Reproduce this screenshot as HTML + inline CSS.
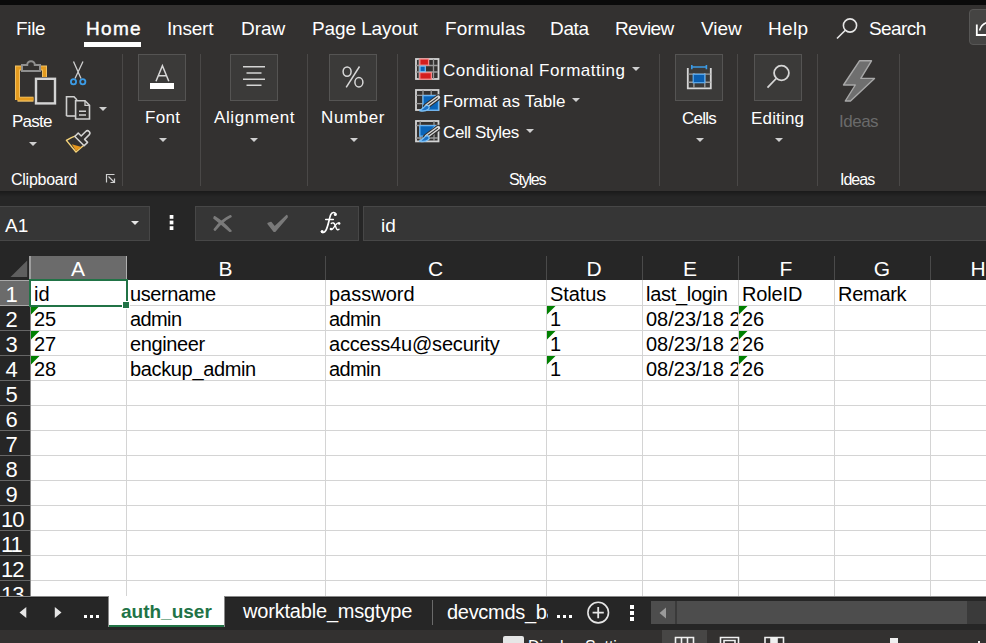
<!DOCTYPE html><html><head><meta charset="utf-8"><style>
*{margin:0;padding:0;box-sizing:border-box}
html,body{width:986px;height:643px;overflow:hidden;background:#262626;font-family:"Liberation Sans",sans-serif;position:relative}
div{position:absolute;white-space:nowrap}
svg{position:absolute}
</style></head><body>
<div style="left:0px;top:0px;width:986px;height:5px;background:#0a0a0a;"></div>
<div style="left:0px;top:5px;width:986px;height:186px;background:#333130;"></div>
<div style="left:16.00px;top:13.92px;font-size:19px;line-height:29px;color:#fff;letter-spacing:-0.333px;">File</div>
<div style="left:167.00px;top:13.92px;font-size:19px;line-height:29px;color:#fff;letter-spacing:-0.200px;">Insert</div>
<div style="left:241.00px;top:13.92px;font-size:19px;line-height:29px;color:#fff;">Draw</div>
<div style="left:312.00px;top:13.92px;font-size:19px;line-height:29px;color:#fff;letter-spacing:-0.100px;">Page Layout</div>
<div style="left:445.00px;top:13.92px;font-size:19px;line-height:29px;color:#fff;letter-spacing:0.143px;">Formulas</div>
<div style="left:550.00px;top:13.92px;font-size:19px;line-height:29px;color:#fff;letter-spacing:-0.333px;">Data</div>
<div style="left:615.00px;top:13.92px;font-size:19px;line-height:29px;color:#fff;letter-spacing:-0.600px;">Review</div>
<div style="left:701.00px;top:13.92px;font-size:19px;line-height:29px;color:#fff;">View</div>
<div style="left:768.00px;top:13.92px;font-size:19px;line-height:29px;color:#fff;letter-spacing:0.333px;">Help</div>
<div style="left:869.00px;top:13.92px;font-size:19px;line-height:29px;color:#fff;letter-spacing:-0.600px;">Search</div>
<div style="left:86.00px;top:13.92px;font-size:19px;line-height:29px;color:#fff;letter-spacing:1.333px;-webkit-text-stroke:0.45px #fff;">Home</div>
<div style="left:84px;top:42px;width:57px;height:5px;background:#fff;"></div>
<svg style="position:absolute;left:834px;top:16px;overflow:visible" width="26" height="26" viewBox="834 16 26 26"><circle cx="850" cy="25.5" r="6.6" fill="none" stroke="#e6e6e6" stroke-width="1.6"/><path d="M845.3 30.2L837 38.5" stroke="#e6e6e6" stroke-width="1.6"/></svg>
<div style="left:969px;top:9px;width:30px;height:36px;background:#454443;border:1px solid #575655;border-radius:4px"></div>
<svg style="position:absolute;left:970px;top:18px;overflow:visible" width="16" height="20" viewBox="970 18 16 20"><path d="M976.8 24.5V35H990" fill="none" stroke="#fff" stroke-width="1.8"/><path d="M979.5 30.5C981 25 984 22.5 990 22" fill="none" stroke="#fff" stroke-width="1.5"/></svg>
<div style="left:122px;top:54px;width:1px;height:132px;background:#4a4847;"></div>
<div style="left:200px;top:54px;width:1px;height:132px;background:#4a4847;"></div>
<div style="left:307px;top:54px;width:1px;height:132px;background:#4a4847;"></div>
<div style="left:397px;top:54px;width:1px;height:132px;background:#4a4847;"></div>
<div style="left:659px;top:54px;width:1px;height:132px;background:#4a4847;"></div>
<div style="left:737px;top:54px;width:1px;height:132px;background:#4a4847;"></div>
<div style="left:817px;top:54px;width:1px;height:132px;background:#4a4847;"></div>
<div style="left:899px;top:54px;width:1px;height:132px;background:#4a4847;"></div>
<svg style="position:absolute;left:10px;top:55px;overflow:visible" width="50" height="52" viewBox="10 55 50 52"><path d="M17.5 100V68H22 M39 68H44.5V77" fill="none" stroke="#f2c46a" stroke-width="5"/><path d="M17.5 99.2H33.5" stroke="#f2c46a" stroke-width="5"/><path d="M17.5 100V68H22 M39 68H44.5V77 M17.5 99H33.5" fill="none" stroke="#e49b1f" stroke-width="3.2"/><path d="M22 71V65H27.2A3.8 3.8 0 0 1 34.8 65H40V71Z" fill="#333130" stroke="#8f8f8f" stroke-width="2"/><rect x="36" y="78.8" width="19" height="24.6" fill="#333130" stroke="#d4d4d4" stroke-width="2.4"/></svg>
<div style="left:12.00px;top:107.61px;font-size:17px;line-height:27px;color:#fff;letter-spacing:-0.750px;">Paste</div>
<svg style="position:absolute;left:29px;top:142px" width="8" height="4"><path d="M0 0H8L4.0 4Z" fill="#cfcfcf"/></svg>
<svg style="position:absolute;left:66px;top:58px;overflow:visible" width="22" height="30" viewBox="66 58 22 30"><path d="M73.5 61.5L81 78.5 M83 61.5L75 78.5" stroke="#cfcfcf" stroke-width="1.3" fill="none"/><circle cx="73.5" cy="81.8" r="2.6" fill="none" stroke="#3c9ce6" stroke-width="1.8"/><circle cx="82.8" cy="81.8" r="2.6" fill="none" stroke="#3c9ce6" stroke-width="1.8"/></svg>
<svg style="position:absolute;left:64px;top:94px;overflow:visible" width="30" height="28" viewBox="64 94 30 28"><path d="M66.5 116V96.8H74L77 100" fill="none" stroke="#cfcfcf" stroke-width="1.6"/><path d="M66.5 116H75" fill="none" stroke="#cfcfcf" stroke-width="1.6"/><path d="M75.6 119V100.8H85L89.5 105.3V119Z" fill="#333130" stroke="#cfcfcf" stroke-width="1.6"/><path d="M85 100.8V105.3H89.5" fill="none" stroke="#cfcfcf" stroke-width="1.3"/><path d="M79 111.2H86 M79 115H86" stroke="#cfcfcf" stroke-width="1.4"/></svg>
<svg style="position:absolute;left:99px;top:107px" width="8" height="4"><path d="M0 0H8L4.0 4Z" fill="#cfcfcf"/></svg>
<svg style="position:absolute;left:62px;top:126px;overflow:visible" width="32" height="30" viewBox="62 126 32 30"><path d="M76.3 135.6Q70.5 137.5 66.4 140.4L76 152L85 144.3" fill="none" stroke="#f5d37a" stroke-width="1.4" stroke-linejoin="round"/><path d="M71.8 144.2L81.5 147L76 151Z" fill="#e6961c"/><g transform="rotate(45 81.2 139.4)"><path d="M74.6 141.8V137H78.8V130.6A2.4 2.4 0 0 1 83.6 130.6V137H87.8V141.8Z" fill="#333130" stroke="#d4d4d4" stroke-width="1.5" stroke-linejoin="round"/></g></svg>
<div style="left:11.00px;top:167.46px;font-size:16px;line-height:26px;color:#fff;letter-spacing:-0.250px;">Clipboard</div>
<svg style="position:absolute;left:104px;top:172px;overflow:visible" width="14" height="14" viewBox="104 172 14 14"><path d="M106.5 182.5V174.5H114.5 M108.5 176.5L114.5 182.5 M114.5 178.5V182.5H110.5" fill="none" stroke="#d0d0d0" stroke-width="1.2"/></svg>
<div style="left:138px;top:54px;width:48px;height:47px;background:#3b3a39;border:1px solid #555453"></div>
<svg style="position:absolute;left:150px;top:60px;overflow:visible" width="26" height="26" viewBox="150 60 26 26"><path d="M156 81.2L162.4 65.8L168.8 81.2 M158.3 75.8H166.5" fill="none" stroke="#d8d8d8" stroke-width="1.5"/></svg>
<div style="left:150px;top:83px;width:24px;height:6px;background:#fff;"></div>
<div style="left:145.00px;top:103.61px;font-size:17px;line-height:27px;color:#fff;letter-spacing:0.333px;">Font</div>
<svg style="position:absolute;left:159px;top:138px" width="8" height="4"><path d="M0 0H8L4.0 4Z" fill="#cfcfcf"/></svg>
<div style="left:230px;top:54px;width:48px;height:47px;background:#3b3a39;border:1px solid #555453"></div>
<svg style="position:absolute;left:240px;top:62px;overflow:visible" width="30" height="30" viewBox="240 62 30 30"><path d="M243 66.8H265 M246.5 73H261.5 M243 79.2H265 M246.5 85.3H261.5" stroke="#d4d4d4" stroke-width="1.4"/></svg>
<div style="left:214.00px;top:103.61px;font-size:17px;line-height:27px;color:#fff;letter-spacing:0.625px;">Alignment</div>
<svg style="position:absolute;left:250px;top:138px" width="8" height="4"><path d="M0 0H8L4.0 4Z" fill="#cfcfcf"/></svg>
<div style="left:329px;top:54px;width:48px;height:47px;background:#3b3a39;border:1px solid #555453"></div>
<svg style="position:absolute;left:338px;top:62px;overflow:visible" width="30" height="30" viewBox="338 62 30 30"><ellipse cx="347.1" cy="71.6" rx="4" ry="4.7" fill="none" stroke="#d8d8d8" stroke-width="1.5"/><ellipse cx="358.9" cy="82.3" rx="4" ry="4.7" fill="none" stroke="#d8d8d8" stroke-width="1.5"/><path d="M359.5 66.5L346.2 87.4" stroke="#d8d8d8" stroke-width="1.5"/></svg>
<div style="left:321.00px;top:103.61px;font-size:17px;line-height:27px;color:#fff;letter-spacing:0.600px;">Number</div>
<svg style="position:absolute;left:350px;top:138px" width="8" height="4"><path d="M0 0H8L4.0 4Z" fill="#cfcfcf"/></svg>
<svg style="position:absolute;left:412px;top:56px;overflow:visible" width="32" height="90" viewBox="412 56 32 90"><rect x="416" y="59" width="22.5" height="20" fill="none" stroke="#d4d4d4" stroke-width="1.8"/><path d="M419.2 59V79 M433.5 59V79 M416 65.5H438 M416 72H438" stroke="#9a9a9a" stroke-width="1.3"/><rect x="419.8" y="59" width="8.8" height="6.2" fill="#d41e1e" stroke="#f08a8a" stroke-width="1.3"/><rect x="419.8" y="72.6" width="11.6" height="6.6" fill="#d41e1e" stroke="#f08a8a" stroke-width="1.3"/><rect x="420" y="66.1" width="5.3" height="5.6" fill="#0a64b8" stroke="#7cc0f5" stroke-width="1.2"/><rect x="416" y="90" width="22.5" height="20" fill="none" stroke="#d4d4d4" stroke-width="1.8"/><path d="M423 90V110 M431.2 90V110 M416 95.4H438 M416 103.6H438" stroke="#9a9a9a" stroke-width="1.3"/><rect x="423" y="95.6" width="15.5" height="14.6" fill="#0a64b8" stroke="#6ab4f2" stroke-width="1.3"/><path d="M438.3 97.3L426 106.3" stroke="#333130" stroke-width="6" stroke-linecap="round"/><path d="M438.3 97.3L426.5 106" stroke="#d8d8d8" stroke-width="3.8" stroke-linecap="round"/><path d="M437.5 97.9L427.5 105.3" stroke="#333130" stroke-width="1.1" stroke-linecap="round"/><path d="M419.3 110.5C422 110 423.5 107 426 105.5C428.5 104.5 430.5 107.5 428.2 109.3C426 111 422 111.2 419.3 110.5Z" fill="#1a6fc4" stroke="#7cc0f5" stroke-width="1.3"/><rect x="416" y="121" width="22.5" height="20.4" fill="none" stroke="#d4d4d4" stroke-width="1.8"/><path d="M420.2 121V141 M434 121V141 M416 125.5H438 M416 138H438" stroke="#9a9a9a" stroke-width="1.3"/><path d="M419.8 125.6H435.5L426 136.2H419.8Z" fill="#0a64b8" stroke="#6ab4f2" stroke-width="1.3" stroke-linejoin="round"/><path d="M438.3 127.8L426 136.8" stroke="#333130" stroke-width="6" stroke-linecap="round"/><path d="M438.3 127.8L426.5 136.5" stroke="#d8d8d8" stroke-width="3.8" stroke-linecap="round"/><path d="M437.5 128.4L427.5 135.8" stroke="#333130" stroke-width="1.1" stroke-linecap="round"/><path d="M419.3 141.0C422 140.5 423.5 137.5 426 136.0C428.5 135.0 430.5 138.0 428.2 139.8C426 141.5 422 141.7 419.3 141.0Z" fill="#1a6fc4" stroke="#7cc0f5" stroke-width="1.3"/></svg>
<div style="left:443.00px;top:56.61px;font-size:17px;line-height:27px;color:#fff;letter-spacing:0.524px;">Conditional Formatting</div>
<svg style="position:absolute;left:632px;top:67px" width="8" height="4"><path d="M0 0H8L4.0 4Z" fill="#cfcfcf"/></svg>
<div style="left:443.00px;top:87.61px;font-size:17px;line-height:27px;color:#fff;letter-spacing:0.071px;">Format as Table</div>
<svg style="position:absolute;left:572px;top:98px" width="8" height="4"><path d="M0 0H8L4.0 4Z" fill="#cfcfcf"/></svg>
<div style="left:443.00px;top:118.61px;font-size:17px;line-height:27px;color:#fff;letter-spacing:-0.400px;">Cell Styles</div>
<svg style="position:absolute;left:526px;top:129px" width="8" height="4"><path d="M0 0H8L4.0 4Z" fill="#cfcfcf"/></svg>
<div style="left:509.00px;top:167.46px;font-size:16px;line-height:26px;color:#fff;letter-spacing:-1.200px;">Styles</div>
<div style="left:675px;top:54px;width:48px;height:47px;background:#3b3a39;border:1px solid #555453"></div>
<svg style="position:absolute;left:684px;top:62px;overflow:visible" width="30" height="30" viewBox="684 62 30 30"><path d="M687.8 68V88.3H710.8V68" fill="none" stroke="#d6d6d6" stroke-width="1.8"/><path d="M693.9 73V88 M704.8 73V88 M688 74.1H710.5 M688 82.2H710.5" stroke="#9a9a9a" stroke-width="1.4"/><rect x="693.2" y="74.3" width="11.6" height="8.4" fill="#0a5eb0" stroke="#58aaf0" stroke-width="1.2"/><path d="M691.8 67H706.4 M691.8 65V69.2 M706.4 65V69.2" stroke="#3c9ce6" stroke-width="1.6"/></svg>
<div style="left:682.00px;top:104.61px;font-size:17px;line-height:27px;color:#fff;letter-spacing:-0.750px;">Cells</div>
<svg style="position:absolute;left:696px;top:138px" width="8" height="4"><path d="M0 0H8L4.0 4Z" fill="#cfcfcf"/></svg>
<div style="left:754px;top:54px;width:48px;height:47px;background:#3b3a39;border:1px solid #555453"></div>
<svg style="position:absolute;left:760px;top:60px;overflow:visible" width="34" height="34" viewBox="760 60 34 34"><circle cx="781.5" cy="73" r="7.4" fill="none" stroke="#d6d6d6" stroke-width="1.8"/><path d="M776.2 78.5L767.5 87.6" stroke="#d6d6d6" stroke-width="1.8"/></svg>
<div style="left:751.00px;top:104.61px;font-size:17px;line-height:27px;color:#fff;letter-spacing:0.167px;">Editing</div>
<svg style="position:absolute;left:775px;top:138px" width="8" height="4"><path d="M0 0H8L4.0 4Z" fill="#cfcfcf"/></svg>
<svg style="position:absolute;left:840px;top:58px;overflow:visible" width="38" height="46" viewBox="840 58 38 46"><path d="M859.5 60.8H871.5L860.8 78.4H874.5L850.5 101H845.3L855.3 85H843.5Z" fill="#6f6f6f" stroke="#a8a8a8" stroke-width="1.4" stroke-linejoin="round"/></svg>
<div style="left:839.00px;top:107.61px;font-size:17px;line-height:27px;color:#6a6a6a;letter-spacing:-0.500px;">Ideas</div>
<div style="left:840.00px;top:167.46px;font-size:16px;line-height:26px;color:#fff;letter-spacing:-1.000px;">Ideas</div>
<div style="left:0;top:191px;width:986px;height:6px;background:linear-gradient(#1a1a1a,#262626)"></div>
<div style="left:-1px;top:206px;width:151px;height:35px;background:#363636;border:1px solid #474747"></div>
<div style="left:195px;top:206px;width:164px;height:35px;background:#363636;border:1px solid #474747"></div>
<div style="left:363px;top:206px;width:640px;height:35px;background:#363636;border:1px solid #474747"></div>
<div style="left:5.00px;top:210.92px;font-size:19px;line-height:29px;color:#fff;">A1</div>
<svg style="position:absolute;left:131px;top:221px" width="8" height="4"><path d="M0 0H8L4.0 4Z" fill="#e6e6e6"/></svg>
<svg style="position:absolute;left:166px;top:212px;overflow:visible" width="12" height="22" viewBox="166 212 12 22"><rect x="169.7" y="215" width="3.7" height="3.8" fill="#fff"/><rect x="169.7" y="220.6" width="3.7" height="3.8" fill="#fff"/><rect x="169.7" y="226.2" width="3.7" height="3.8" fill="#fff"/></svg>
<svg style="position:absolute;left:210px;top:212px;overflow:visible" width="26" height="24" viewBox="210 212 26 24"><path d="M214.5 216.8Q223 222 231 231L230 231.3Q222.5 225 214 218.2Z" fill="#7a7a7a" stroke="#7a7a7a" stroke-width="1.6" stroke-linejoin="round"/><path d="M231 216.5Q223 220.5 215 230.2L214.3 229.5Q221 220 230.5 215.8Z" fill="#7a7a7a" stroke="#7a7a7a" stroke-width="1.6" stroke-linejoin="round"/></svg>
<svg style="position:absolute;left:265px;top:212px;overflow:visible" width="26" height="24" viewBox="265 212 26 24"><path d="M268 223.5L271 222.5L274.6 227L286.8 215.5L287.2 217L275 231.2L273.8 231.2Z" fill="#7a7a7a" stroke="#7a7a7a" stroke-width="1.4" stroke-linejoin="round"/></svg>
<svg style="position:absolute;left:316px;top:208px;overflow:visible" width="28" height="28" viewBox="316 208 28 28"><g fill="none" stroke="#fff" stroke-linecap="round"><path d="M335.8 213.8C334.8 211.9 332 212 330.8 214.5C329.2 218 328 227.5 325.6 230.8C324.2 232.9 322.2 233 321.6 231.6" stroke-width="1.7"/><path d="M325.6 219.5H333.4" stroke-width="1.3"/><path d="M331.3 223.4C332.8 222.3 334.3 222.9 334.9 224.8L336.3 228.3C336.9 230 338 230.1 339 229.2" stroke-width="1.4"/><path d="M339.3 223.1C338.3 222.6 337.3 223 336.3 224.2L333.1 228.4C332.1 229.8 331 229.8 330.5 229.1" stroke-width="1.4"/></g><circle cx="335.3" cy="214.4" r="1.5" fill="#fff"/><circle cx="322.2" cy="231.4" r="1.5" fill="#fff"/><circle cx="339.2" cy="223.5" r="1.2" fill="#fff"/><circle cx="330.9" cy="229" r="1.2" fill="#fff"/></svg>
<div style="left:381.00px;top:210.92px;font-size:19px;line-height:29px;color:#fff;">id</div>
<div style="left:30px;top:256px;width:96px;height:24px;background:#6b6b6b;"></div>
<div style="left:29px;top:256px;width:2px;height:24px;background:#9e9e9e;"></div>
<svg style="position:absolute;left:8px;top:258px;overflow:visible" width="22" height="22" viewBox="8 258 22 22"><path d="M27.2 260.5V277H10.5Z" fill="#5f5f5f"/></svg>
<div style="left:30px;top:256px;width:96px;height:24px;text-align:center;font-size:21px;line-height:25px;color:#fff">A</div>
<div style="left:126px;top:256px;width:1px;height:24px;background:#4a4a4a;"></div>
<div style="left:126px;top:256px;width:199px;height:24px;text-align:center;font-size:21px;line-height:25px;color:#fff">B</div>
<div style="left:325px;top:256px;width:1px;height:24px;background:#4a4a4a;"></div>
<div style="left:325px;top:256px;width:221px;height:24px;text-align:center;font-size:21px;line-height:25px;color:#fff">C</div>
<div style="left:546px;top:256px;width:1px;height:24px;background:#4a4a4a;"></div>
<div style="left:546px;top:256px;width:96px;height:24px;text-align:center;font-size:21px;line-height:25px;color:#fff">D</div>
<div style="left:642px;top:256px;width:1px;height:24px;background:#4a4a4a;"></div>
<div style="left:642px;top:256px;width:96px;height:24px;text-align:center;font-size:21px;line-height:25px;color:#fff">E</div>
<div style="left:738px;top:256px;width:1px;height:24px;background:#4a4a4a;"></div>
<div style="left:738px;top:256px;width:96px;height:24px;text-align:center;font-size:21px;line-height:25px;color:#fff">F</div>
<div style="left:834px;top:256px;width:1px;height:24px;background:#4a4a4a;"></div>
<div style="left:834px;top:256px;width:96px;height:24px;text-align:center;font-size:21px;line-height:25px;color:#fff">G</div>
<div style="left:930px;top:256px;width:1px;height:24px;background:#4a4a4a;"></div>
<div style="left:930px;top:256px;width:96px;height:24px;text-align:center;font-size:21px;line-height:25px;color:#fff">H</div>
<div style="left:0px;top:280px;width:30px;height:25px;background:#6b6b6b;"></div>
<div style="left:0px;top:280px;width:30px;height:1px;background:#a8a8a8;"></div>
<div style="left:0px;top:305px;width:30px;height:1px;background:#a8a8a8;"></div>
<div style="left:0;top:280px;width:21px;height:25px;text-align:center;font-size:22px;line-height:29px;letter-spacing:-1px;text-indent:1px;color:#fff">1</div>
<div style="left:0;top:305px;width:21px;height:25px;text-align:center;font-size:22px;line-height:29px;letter-spacing:-1px;text-indent:1px;color:#fff">2</div>
<div style="left:0px;top:330px;width:30px;height:1px;background:#666666;"></div>
<div style="left:0;top:330px;width:21px;height:25px;text-align:center;font-size:22px;line-height:29px;letter-spacing:-1px;text-indent:1px;color:#fff">3</div>
<div style="left:0px;top:355px;width:30px;height:1px;background:#666666;"></div>
<div style="left:0;top:355px;width:21px;height:25px;text-align:center;font-size:22px;line-height:29px;letter-spacing:-1px;text-indent:1px;color:#fff">4</div>
<div style="left:0px;top:380px;width:30px;height:1px;background:#666666;"></div>
<div style="left:0;top:380px;width:21px;height:25px;text-align:center;font-size:22px;line-height:29px;letter-spacing:-1px;text-indent:1px;color:#fff">5</div>
<div style="left:0px;top:405px;width:30px;height:1px;background:#666666;"></div>
<div style="left:0;top:405px;width:21px;height:25px;text-align:center;font-size:22px;line-height:29px;letter-spacing:-1px;text-indent:1px;color:#fff">6</div>
<div style="left:0px;top:430px;width:30px;height:1px;background:#666666;"></div>
<div style="left:0;top:430px;width:21px;height:25px;text-align:center;font-size:22px;line-height:29px;letter-spacing:-1px;text-indent:1px;color:#fff">7</div>
<div style="left:0px;top:455px;width:30px;height:1px;background:#666666;"></div>
<div style="left:0;top:455px;width:21px;height:25px;text-align:center;font-size:22px;line-height:29px;letter-spacing:-1px;text-indent:1px;color:#fff">8</div>
<div style="left:0px;top:480px;width:30px;height:1px;background:#666666;"></div>
<div style="left:0;top:480px;width:21px;height:25px;text-align:center;font-size:22px;line-height:29px;letter-spacing:-1px;text-indent:1px;color:#fff">9</div>
<div style="left:0px;top:505px;width:30px;height:1px;background:#666666;"></div>
<div style="left:0;top:505px;width:21px;height:25px;text-align:center;font-size:22px;line-height:29px;letter-spacing:-1px;text-indent:1px;color:#fff">10</div>
<div style="left:0px;top:530px;width:30px;height:1px;background:#666666;"></div>
<div style="left:0;top:530px;width:21px;height:25px;text-align:center;font-size:22px;line-height:29px;letter-spacing:-1px;text-indent:1px;color:#fff">11</div>
<div style="left:0px;top:555px;width:30px;height:1px;background:#666666;"></div>
<div style="left:0;top:555px;width:21px;height:25px;text-align:center;font-size:22px;line-height:29px;letter-spacing:-1px;text-indent:1px;color:#fff">12</div>
<div style="left:0px;top:580px;width:30px;height:1px;background:#666666;"></div>
<div style="left:0;top:580px;width:21px;height:25px;text-align:center;font-size:22px;line-height:29px;letter-spacing:-1px;text-indent:1px;color:#fff">13</div>
<div style="left:30px;top:280px;width:956px;height:317px;background:#fff;overflow:hidden">
<div style="left:96px;top:0;width:1px;height:317px;background:#d4d4d4"></div>
<div style="left:295px;top:0;width:1px;height:317px;background:#d4d4d4"></div>
<div style="left:516px;top:0;width:1px;height:317px;background:#d4d4d4"></div>
<div style="left:612px;top:0;width:1px;height:317px;background:#d4d4d4"></div>
<div style="left:708px;top:0;width:1px;height:317px;background:#d4d4d4"></div>
<div style="left:804px;top:0;width:1px;height:317px;background:#d4d4d4"></div>
<div style="left:900px;top:0;width:1px;height:317px;background:#d4d4d4"></div>
<div style="left:0;top:25px;width:956px;height:1px;background:#d4d4d4"></div>
<div style="left:0;top:50px;width:956px;height:1px;background:#d4d4d4"></div>
<div style="left:0;top:75px;width:956px;height:1px;background:#d4d4d4"></div>
<div style="left:0;top:100px;width:956px;height:1px;background:#d4d4d4"></div>
<div style="left:0;top:125px;width:956px;height:1px;background:#d4d4d4"></div>
<div style="left:0;top:150px;width:956px;height:1px;background:#d4d4d4"></div>
<div style="left:0;top:175px;width:956px;height:1px;background:#d4d4d4"></div>
<div style="left:0;top:200px;width:956px;height:1px;background:#d4d4d4"></div>
<div style="left:0;top:225px;width:956px;height:1px;background:#d4d4d4"></div>
<div style="left:0;top:250px;width:956px;height:1px;background:#d4d4d4"></div>
<div style="left:0;top:275px;width:956px;height:1px;background:#d4d4d4"></div>
<div style="left:0;top:300px;width:956px;height:1px;background:#d4d4d4"></div>
</div>
<div style="left:34px;top:282px;width:92px;height:25px;overflow:hidden;font-size:20px;line-height:25px;color:#000;">id</div>
<div style="left:130px;top:282px;width:195px;height:25px;overflow:hidden;font-size:20px;line-height:25px;color:#000;letter-spacing:-0.41px;">username</div>
<div style="left:329px;top:282px;width:217px;height:25px;overflow:hidden;font-size:20px;line-height:25px;color:#000;">password</div>
<div style="left:550px;top:282px;width:92px;height:25px;overflow:hidden;font-size:20px;line-height:25px;color:#000;letter-spacing:-0.1px;">Status</div>
<div style="left:646px;top:282px;width:92px;height:25px;overflow:hidden;font-size:20px;line-height:25px;color:#000;letter-spacing:-0.29px;">last_login</div>
<div style="left:742px;top:282px;width:92px;height:25px;overflow:hidden;font-size:20px;line-height:25px;color:#000;letter-spacing:-0.16px;">RoleID</div>
<div style="left:838px;top:282px;width:92px;height:25px;overflow:hidden;font-size:20px;line-height:25px;color:#000;letter-spacing:-0.28px;">Remark</div>
<div style="left:34px;top:307px;width:92px;height:25px;overflow:hidden;font-size:20px;line-height:25px;color:#000;">25</div>
<svg style="position:absolute;left:31px;top:306px;overflow:visible" width="10" height="10" viewBox="31 306 10 10"><path d="M31 306H39.5L31 314.5Z" fill="#008000"/></svg>
<div style="left:130px;top:307px;width:195px;height:25px;overflow:hidden;font-size:20px;line-height:25px;color:#000;letter-spacing:-0.6px;">admin</div>
<div style="left:329px;top:307px;width:217px;height:25px;overflow:hidden;font-size:20px;line-height:25px;color:#000;letter-spacing:-0.6px;">admin</div>
<div style="left:550px;top:307px;width:92px;height:25px;overflow:hidden;font-size:20px;line-height:25px;color:#000;">1</div>
<svg style="position:absolute;left:547px;top:306px;overflow:visible" width="10" height="10" viewBox="547 306 10 10"><path d="M547 306H555.5L547 314.5Z" fill="#008000"/></svg>
<div style="left:646px;top:307px;width:92px;height:25px;overflow:hidden;font-size:20px;line-height:25px;color:#000;">08/23/18 2</div>
<div style="left:742px;top:307px;width:92px;height:25px;overflow:hidden;font-size:20px;line-height:25px;color:#000;">26</div>
<svg style="position:absolute;left:739px;top:306px;overflow:visible" width="10" height="10" viewBox="739 306 10 10"><path d="M739 306H747.5L739 314.5Z" fill="#008000"/></svg>
<div style="left:34px;top:332px;width:92px;height:25px;overflow:hidden;font-size:20px;line-height:25px;color:#000;">27</div>
<svg style="position:absolute;left:31px;top:331px;overflow:visible" width="10" height="10" viewBox="31 331 10 10"><path d="M31 331H39.5L31 339.5Z" fill="#008000"/></svg>
<div style="left:130px;top:332px;width:195px;height:25px;overflow:hidden;font-size:20px;line-height:25px;color:#000;letter-spacing:-0.4px;">engineer</div>
<div style="left:329px;top:332px;width:217px;height:25px;overflow:hidden;font-size:20px;line-height:25px;color:#000;letter-spacing:-0.19px;">access4u@security</div>
<div style="left:550px;top:332px;width:92px;height:25px;overflow:hidden;font-size:20px;line-height:25px;color:#000;">1</div>
<svg style="position:absolute;left:547px;top:331px;overflow:visible" width="10" height="10" viewBox="547 331 10 10"><path d="M547 331H555.5L547 339.5Z" fill="#008000"/></svg>
<div style="left:646px;top:332px;width:92px;height:25px;overflow:hidden;font-size:20px;line-height:25px;color:#000;">08/23/18 2</div>
<div style="left:742px;top:332px;width:92px;height:25px;overflow:hidden;font-size:20px;line-height:25px;color:#000;">26</div>
<svg style="position:absolute;left:739px;top:331px;overflow:visible" width="10" height="10" viewBox="739 331 10 10"><path d="M739 331H747.5L739 339.5Z" fill="#008000"/></svg>
<div style="left:34px;top:357px;width:92px;height:25px;overflow:hidden;font-size:20px;line-height:25px;color:#000;">28</div>
<svg style="position:absolute;left:31px;top:356px;overflow:visible" width="10" height="10" viewBox="31 356 10 10"><path d="M31 356H39.5L31 364.5Z" fill="#008000"/></svg>
<div style="left:130px;top:357px;width:195px;height:25px;overflow:hidden;font-size:20px;line-height:25px;color:#000;letter-spacing:-0.35px;">backup_admin</div>
<div style="left:329px;top:357px;width:217px;height:25px;overflow:hidden;font-size:20px;line-height:25px;color:#000;letter-spacing:-0.6px;">admin</div>
<div style="left:550px;top:357px;width:92px;height:25px;overflow:hidden;font-size:20px;line-height:25px;color:#000;">1</div>
<svg style="position:absolute;left:547px;top:356px;overflow:visible" width="10" height="10" viewBox="547 356 10 10"><path d="M547 356H555.5L547 364.5Z" fill="#008000"/></svg>
<div style="left:646px;top:357px;width:92px;height:25px;overflow:hidden;font-size:20px;line-height:25px;color:#000;">08/23/18 2</div>
<div style="left:742px;top:357px;width:92px;height:25px;overflow:hidden;font-size:20px;line-height:25px;color:#000;">26</div>
<svg style="position:absolute;left:739px;top:356px;overflow:visible" width="10" height="10" viewBox="739 356 10 10"><path d="M739 356H747.5L739 364.5Z" fill="#008000"/></svg>
<div style="left:30px;top:280px;width:1px;height:316px;background:#8a8a8a;"></div>
<div style="left:29px;top:279px;width:99px;height:2px;background:#217346;"></div>
<div style="left:29px;top:279px;width:2px;height:28px;background:#217346;"></div>
<div style="left:126px;top:279px;width:2px;height:22px;background:#217346;"></div>
<div style="left:29px;top:305px;width:93px;height:2px;background:#217346;"></div>
<div style="left:122px;top:301px;width:8px;height:8px;background:#fff;"></div>
<div style="left:123px;top:302px;width:6px;height:6px;background:#217346;"></div>
<div style="left:126px;top:256px;width:1px;height:23px;background:#b0b0b0;"></div>
<div style="left:0px;top:596px;width:986px;height:34px;background:#262626;"></div>
<div style="left:0px;top:596px;width:986px;height:1px;background:#8a8a8a;"></div>
<div style="left:0px;top:597px;width:986px;height:1px;background:#1c1c1c;"></div>
<svg style="position:absolute;left:16px;top:604px;overflow:visible" width="50" height="18" viewBox="16 604 50 18"><path d="M26.3 607V618L19.5 612.5Z M54.8 607V618L61.5 612.5Z" fill="#e6e6e6"/></svg>
<div style="left:84px;top:615px;width:3px;height:3px;background:#fff;"></div>
<div style="left:90px;top:615px;width:3px;height:3px;background:#fff;"></div>
<div style="left:96px;top:615px;width:3px;height:3px;background:#fff;"></div>
<div style="left:108px;top:596px;width:117px;height:31px;background:#8a8a8a;"></div>
<div style="left:109px;top:596px;width:115px;height:29px;background:#fff;"></div>
<div style="left:109px;top:625px;width:115px;height:2px;background:#217346;"></div>
<div style="left:121.00px;top:596.92px;font-size:19px;line-height:29px;color:#217346;font-weight:bold;">auth_user</div>
<div style="left:243.00px;top:596.07px;font-size:20px;line-height:30px;color:#fff;letter-spacing:-0.188px;">worktable_msgtype</div>
<div style="left:432px;top:600px;width:1px;height:25px;background:#6a6a6a;"></div>
<div style="left:447px;top:598px;width:101px;height:28px;overflow:hidden"><div style="left:0;top:0;font-size:20px;line-height:28px;color:#fff;letter-spacing:-0.3px">devcmds_backup</div></div>
<div style="left:557px;top:615px;width:3px;height:3px;background:#fff;"></div>
<div style="left:563px;top:615px;width:3px;height:3px;background:#fff;"></div>
<div style="left:569px;top:615px;width:3px;height:3px;background:#fff;"></div>
<svg style="position:absolute;left:586px;top:600px;overflow:visible" width="26" height="26" viewBox="586 600 26 26"><circle cx="598.2" cy="612.6" r="10.3" fill="none" stroke="#e6e6e6" stroke-width="1.6"/><path d="M598.2 607V618.2 M592.6 612.6H603.8" stroke="#e6e6e6" stroke-width="1.8"/></svg>
<div style="left:630px;top:605px;width:4px;height:4px;background:#fff;"></div>
<div style="left:630px;top:611px;width:4px;height:4px;background:#fff;"></div>
<div style="left:630px;top:617px;width:4px;height:4px;background:#fff;"></div>
<div style="left:651px;top:601px;width:335px;height:23px;background:#3a3a3a;"></div>
<div style="left:651px;top:601px;width:24px;height:23px;background:#4d4d4d;"></div>
<svg style="position:absolute;left:655px;top:604px;overflow:visible" width="16" height="18" viewBox="655 604 16 18"><path d="M666 607.5V618.5L659.5 613Z" fill="#9a9a9a"/></svg>
<div style="left:677px;top:601px;width:290px;height:23px;background:#4d4d4d;"></div>
<div style="left:0px;top:630px;width:986px;height:13px;background:#333130;"></div>
<div style="left:503px;top:636px;width:21px;height:10px;background:#e6e6e6;border-radius:2px"></div>
<div style="left:528px;top:637px;font-size:16px;line-height:20px;color:#fff">Display Settings</div>
<div style="left:662px;top:630px;width:45px;height:13px;background:#474645;"></div>
<svg style="position:absolute;left:674px;top:636px;overflow:visible" width="22" height="8" viewBox="674 636 22 8"><path d="M675.5 643V637.5H693.5V643 M681.5 637.5V643 M687.5 637.5V643" fill="none" stroke="#f0f0f0" stroke-width="1.6"/></svg>
<svg style="position:absolute;left:718px;top:636px;overflow:visible" width="22" height="8" viewBox="718 636 22 8"><path d="M720.5 643V637.5H738.5V643 M724 643V640.5H735V643" fill="none" stroke="#f0f0f0" stroke-width="1.6"/></svg>
<svg style="position:absolute;left:763px;top:636px;overflow:visible" width="22" height="8" viewBox="763 636 22 8"><path d="M765 643V637.5H783.5V643 M771 637.5V643 M777 637.5V643" fill="none" stroke="#f0f0f0" stroke-width="1.6"/><rect x="771" y="637" width="6" height="6" fill="#f0f0f0"/></svg>
<div style="left:890px;top:638px;width:8px;height:5px;background:#f0f0f0;"></div>
<div style="left:978px;top:641px;width:2px;height:2px;background:#f0f0f0;"></div>
</body></html>
